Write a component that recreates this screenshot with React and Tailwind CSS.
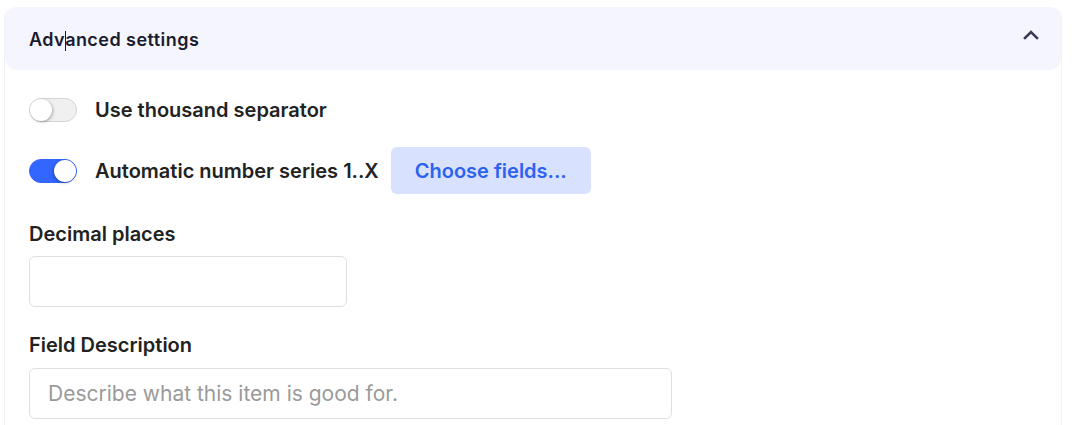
import React, { useState } from "react";

function Toggle({ on, onChange }) {
  return (
    <button
      onClick={onChange}
      className={
        on
          ? "relative w-12 h-6 rounded-full bg-[#3366ff] border border-[#3366ff] shrink-0"
          : "relative w-12 h-6 rounded-full bg-[#f0f0f0] border border-[#d4d4d4] shrink-0"
      }
    >
      <span
        className={
          on
            ? "absolute top-[0px] right-[0px] w-[22px] h-[22px] rounded-full bg-white shadow-[-1px_1px_3px_rgba(0,0,0,0.3)]"
            : "absolute top-[0px] left-[0px] w-[22px] h-[22px] rounded-full bg-white shadow-[1px_1px_3px_rgba(0,0,0,0.3)]"
        }
      />
    </button>
  );
}

export default function App() {
  const [sep, setSep] = useState(false);
  const [auto, setAuto] = useState(true);

  return (
    <div
      className="min-h-screen bg-white pl-[4px] pt-[7px] pr-[16px]"
      style={{ fontFamily: "Inter, 'Noto Sans', sans-serif" }}
    >
      <div className="w-[1058px] border-x border-[#f1f1f7] rounded-t-xl">
        {/* Header */}
        <div className="h-[63px] bg-[#f5f5fe] rounded-xl flex items-center justify-between pl-[24px] pr-[22px]">
          <h2 className="text-[18px] font-semibold text-[#1b1b2f] tracking-[0.45px] pt-[1px]">
            Adv
            <span className="inline-block w-px h-[20px] bg-[#1b1b2f] align-middle -mx-[0.5px]" />
            anced settings
          </h2>
          <svg width="16" height="16" viewBox="0 0 16 16" className="mt-[-8px]">
            <path
              d="M2 11 L8 5 L14 11"
              fill="none"
              stroke="#3b3b56"
              strokeWidth="2.6"
              strokeLinecap="square"
              strokeLinejoin="miter"
            />
          </svg>
        </div>

        {/* Body */}
        <div className="px-[24px] pt-[28px] pb-[10px]">
          <div className="flex items-center gap-[18px] h-6">
            <Toggle on={sep} onChange={() => setSep(!sep)} />
            <span className="text-[20px] font-semibold text-[#222] leading-6">
              Use thousand separator
            </span>
          </div>

          <div className="flex items-center mt-[25px] h-[47px]">
            <Toggle on={auto} onChange={() => setAuto(!auto)} />
            <span className="ml-[18px] text-[20px] font-semibold text-[#222] leading-6 mt-[1px]">
              Automatic number series 1..X
            </span>
            <button className="ml-[12px] w-[200px] h-[47px] rounded-md bg-[#d8e1fd] text-[#2d62f0] text-[20px] font-semibold">
              Choose fields...
            </button>
          </div>

          <div className="mt-[28px]">
            <label className="block text-[20px] font-semibold text-[#222] leading-6">
              Decimal places
            </label>
            <input
              type="text"
              className="mt-[10px] block w-[318px] h-[51px] rounded-md border border-[#dcdfe4] px-[18px] text-[20px] outline-none"
            />
          </div>

          <div className="mt-[26px]">
            <label className="block text-[20px] font-semibold text-[#222] leading-6">
              Field Description
            </label>
            <input
              type="text"
              placeholder="Describe what this item is good for."
              className="mt-[11px] block w-[643px] h-[51px] rounded-md border border-[#dcdfe4] px-[18px] text-[21px] text-[#222] placeholder:text-[#9a9a9a] outline-none"
            />
          </div>
        </div>
      </div>
    </div>
  );
}
